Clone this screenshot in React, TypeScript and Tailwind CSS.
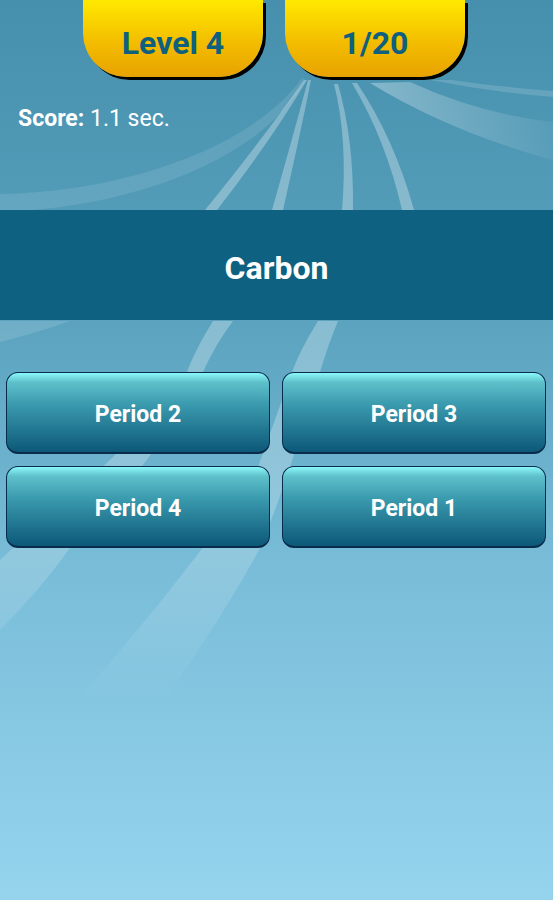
import React from "react";

const answers = ["Period 2", "Period 3", "Period 4", "Period 1"];

function Swirls() {
  return (
    <svg
      className="absolute inset-0 pointer-events-none"
      width="553"
      height="900"
      viewBox="0 0 553 900"
    >
      <defs>
        <linearGradient id="fadeRight" x1="370" y1="0" x2="553" y2="0" gradientUnits="userSpaceOnUse">
          <stop offset="0" stopColor="#fff" stopOpacity="0.32" />
          <stop offset="1" stopColor="#fff" stopOpacity="0.05" />
        </linearGradient>
        <linearGradient id="fadeDown" x1="0" y1="321" x2="0" y2="700" gradientUnits="userSpaceOnUse">
          <stop offset="0" stopColor="#fff" stopOpacity="0.28" />
          <stop offset="0.55" stopColor="#fff" stopOpacity="0.22" />
          <stop offset="1" stopColor="#fff" stopOpacity="0" />
        </linearGradient>
      </defs>
      {/* top fan */}
      <g fill="#fff">
        <path d="M302,78 C250,150 120,192 0,194 L0,212 C130,208 262,160 305,80 Z" opacity="0.1" />
        <path d="M304,80 Q262,140 205,210 L217,210 Q270,142 307,80 Z" opacity="0.3" />
        <path d="M308,80 Q292,140 272,210 L283,210 Q299,140 311,80 Z" opacity="0.3" />
        <path d="M334,84 Q348,140 342,210 L353,210 Q354,140 338,84 Z" opacity="0.3" />
        <path d="M352,83 Q386,140 402,210 L414,210 Q394,138 357,83 Z" opacity="0.3" />
        <path d="M430,80 Q490,92 553,97 L553,91 Q492,86 452,80 Z" opacity="0.14" />
      </g>
      <path d="M370,83 Q450,132 553,160 L553,122 Q480,114 410,82 Z" fill="url(#fadeRight)" />
      {/* below the question bar */}
      <path d="M0,342 Q40,332 70,321 L0,321 Z" fill="#fff" opacity="0.13" />
      <path
        d="M213,321 Q195,350 187,372 Q150,420 110,460 Q55,510 0,560 L0,630 Q40,590 70,548 Q110,505 147,460 Q180,410 203,372 Q215,345 233,321 Z"
        fill="url(#fadeDown)"
      />
      <path
        d="M318,321 Q300,350 292,372 Q275,420 258,467 Q230,510 201,550 Q140,630 60,720 L150,720 Q215,630 259,550 Q276,510 290,467 Q306,420 320,372 Q328,345 338,321 Z"
        fill="url(#fadeDown)"
      />
    </svg>
  );
}

export default function App() {
  return (
    <div
      className="relative w-full h-[900px] overflow-hidden bg-[linear-gradient(180deg,#4690ad_0%,#5aa2be_35%,#78bcd7_62%,#96d4ee_100%)]"
      style={{ fontFamily: "Roboto, 'Liberation Sans', sans-serif" }}
    >
      <Swirls />

      <div className="relative flex flex-col">
        {/* Top tabs */}
        <div className="flex h-[80px] pl-[83px] gap-[22px]">
          {["Level 4", "1/20"].map((label) => (
            <div
              key={label}
              className="w-[180px] h-[77px] rounded-b-[44px] shadow-[3px_3px_0_#000] bg-[linear-gradient(180deg,#ffe900_0%,#f3bd00_55%,#e8a200_100%)] flex items-center justify-center pt-[9px]"
            >
              <span className="text-[32px] font-bold text-[#0f5f7e] leading-none">
                {label}
              </span>
            </div>
          ))}
        </div>

        {/* Score */}
        <div className="mt-[26px] pl-[18px] text-[23px] leading-[26px] text-white">
          <span className="font-bold">Score:</span> 1.1 sec.
        </div>

        {/* Question */}
        <div className="mt-[78px] h-[110px] bg-[#0e6180] flex items-center justify-center pt-[5px]">
          <span className="text-[32px] font-bold text-white">Carbon</span>
        </div>

        {/* Answers */}
        <div className="mt-[52px] pl-[6px] pr-[7px] grid grid-cols-2 gap-[12px]">
          {answers.map((a) => (
            <button
              key={a}
              className="h-[82px] rounded-[12px] border border-b-2 border-[#0a2c4c] bg-[linear-gradient(180deg,#8af8fa_0%,#5ec0ca_12%,#3a9aae_40%,#0c5878_100%)] flex items-center justify-center pt-[5px]"
            >
              <span className="text-[23px] font-bold text-white">{a}</span>
            </button>
          ))}
        </div>
      </div>
    </div>
  );
}
